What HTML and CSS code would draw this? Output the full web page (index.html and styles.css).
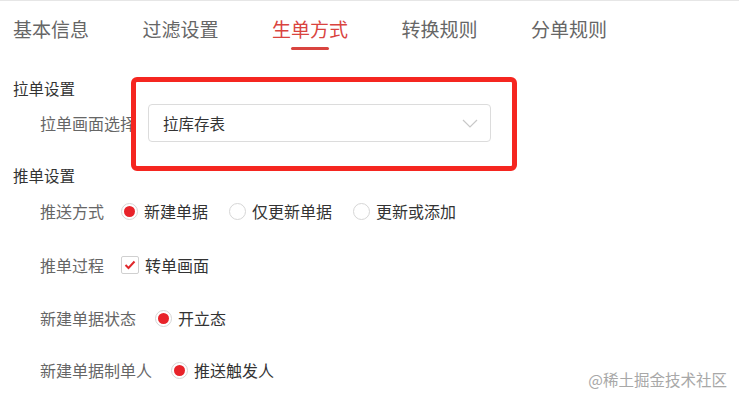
FILE: index.html
```html
<!DOCTYPE html>
<html lang="zh-CN">
<head>
<meta charset="utf-8">
<link rel="stylesheet" href="styles.css">
</head>
<body>
<div class="page">
  <nav class="tabs">
    <span class="tab">基本信息</span>
    <span class="tab">过滤设置</span>
    <span class="tab active">生单方式</span>
    <span class="tab">转换规则</span>
    <span class="tab">分单规则</span>
  </nav>

  <div class="form">
    <div class="section-title first">拉单设置</div>
    <div class="row select-row">
      <span class="label">拉单画面选择</span>
      <div class="select">
        <span class="select-value">拉库存表</span>
        <svg class="chevron" width="16" height="9" viewBox="0 0 16 9"><path d="M1 1 L8 8 L15 1" fill="none" stroke="#c8c8c8" stroke-width="1.2"/></svg>
      </div>
    </div>

    <div class="section-title second">推单设置</div>
    <div class="row r1">
      <span class="label">推送方式</span>
      <span class="opt"><span class="radio checked"></span>新建单据</span>
      <span class="opt"><span class="radio"></span>仅更新单据</span>
      <span class="opt"><span class="radio"></span>更新或添加</span>
    </div>
    <div class="row r2">
      <span class="label">推单过程</span>
      <span class="opt"><span class="checkbox"><svg width="12" height="10" viewBox="0 0 12 10"><path d="M1.5 5 L4.5 8 L10.5 1.5" fill="none" stroke="#e0282c" stroke-width="2"/></svg></span>转单画面</span>
    </div>
    <div class="row r3">
      <span class="label">新建单据状态</span>
      <span class="opt"><span class="radio checked"></span>开立态</span>
    </div>
    <div class="row r4">
      <span class="label">新建单据制单人</span>
      <span class="opt"><span class="radio checked"></span>推送触发人</span>
    </div>
  </div>

  <div class="highlight"></div>
  <div class="watermark">@稀土掘金技术社区</div>
</div>
</body>
</html>
```

FILE: styles.css
```css
* { box-sizing: border-box; }
html, body { margin: 0; padding: 0; background: #fff; }
body {
  font-family: "Noto Sans CJK SC", "Noto Sans", sans-serif;
  color: #333;
}
.page {
  position: relative;
  width: 739px;
  height: 400px;
  overflow: hidden;
  border-top: 1px solid #e6e6e6;
}
.tabs {
  display: flex;
  gap: 53.5px;
  padding: 16px 0 0 13px;
  height: 56px;
}
.tab {
  position: relative;
  font-size: 19px;
  line-height: 24px;
  color: #666;
  white-space: nowrap;
}
.tab.active { color: #d9443f; }
.tab.active::after {
  content: "";
  position: absolute;
  left: 19px;
  top: 30px;
  width: 38px;
  height: 3px;
  border-radius: 2px;
  background: #d9443f;
}
.form {
  font-size: 16px;
  line-height: 22px;
}
.section-title {
  padding-left: 13px;
  color: #333;
  font-size: 15.5px;
}
.section-title.first { margin-top: 20px; }
.section-title.second { margin-top: 22px; }
.row {
  display: flex;
  align-items: center;
  padding-left: 40px;
  height: 22px;
}
.label { color: #666; white-space: nowrap; }
.select-row { margin-top: 5px; height: 38px; }
.select-row .label { width: 108px; }
.select {
  display: flex;
  align-items: center;
  justify-content: space-between;
  width: 343px;
  height: 38px;
  border: 1px solid #dcdcdc;
  border-radius: 4px;
  padding: 0 12px 0 14px;
  color: #333;
  font-size: 15.5px;
}
.chevron { margin-top: 1px; }
.r1 { margin-top: 14px; }
.r1 .label { margin-right: 17px; }
.r2 { margin-top: 32px; }
.r2 .label { margin-right: 17px; }
.r3 { margin-top: 31px; }
.r3 .label { margin-right: 19px; }
.r4 { margin-top: 30px; }
.r4 .label { margin-right: 19px; }
.opt {
  display: inline-flex;
  align-items: center;
  color: #333;
  margin-right: 21px;
  white-space: nowrap;
}
.radio {
  width: 17px;
  height: 17px;
  border: 1px solid #d6d6d6;
  border-radius: 50%;
  margin-right: 6px;
  position: relative;
  flex: none;
}
.radio.checked::after {
  content: "";
  position: absolute;
  left: 2px; top: 2px;
  width: 11px; height: 11px;
  border-radius: 50%;
  background: #e8232a;
}
.checkbox {
  width: 18px;
  height: 18px;
  border: 1px solid #d0d0d0;
  border-radius: 2px;
  margin-right: 6px;
  display: flex;
  align-items: center;
  justify-content: center;
  flex: none;
}
.highlight {
  position: absolute;
  left: 131px;
  top: 76px;
  width: 386px;
  height: 94px;
  border: 5px solid #f52620;
  border-radius: 6px;
}
.watermark {
  position: absolute;
  right: 12px;
  top: 367px;
  font-size: 15.5px;
  color: #a8a8a8;
  white-space: nowrap;
}
```
